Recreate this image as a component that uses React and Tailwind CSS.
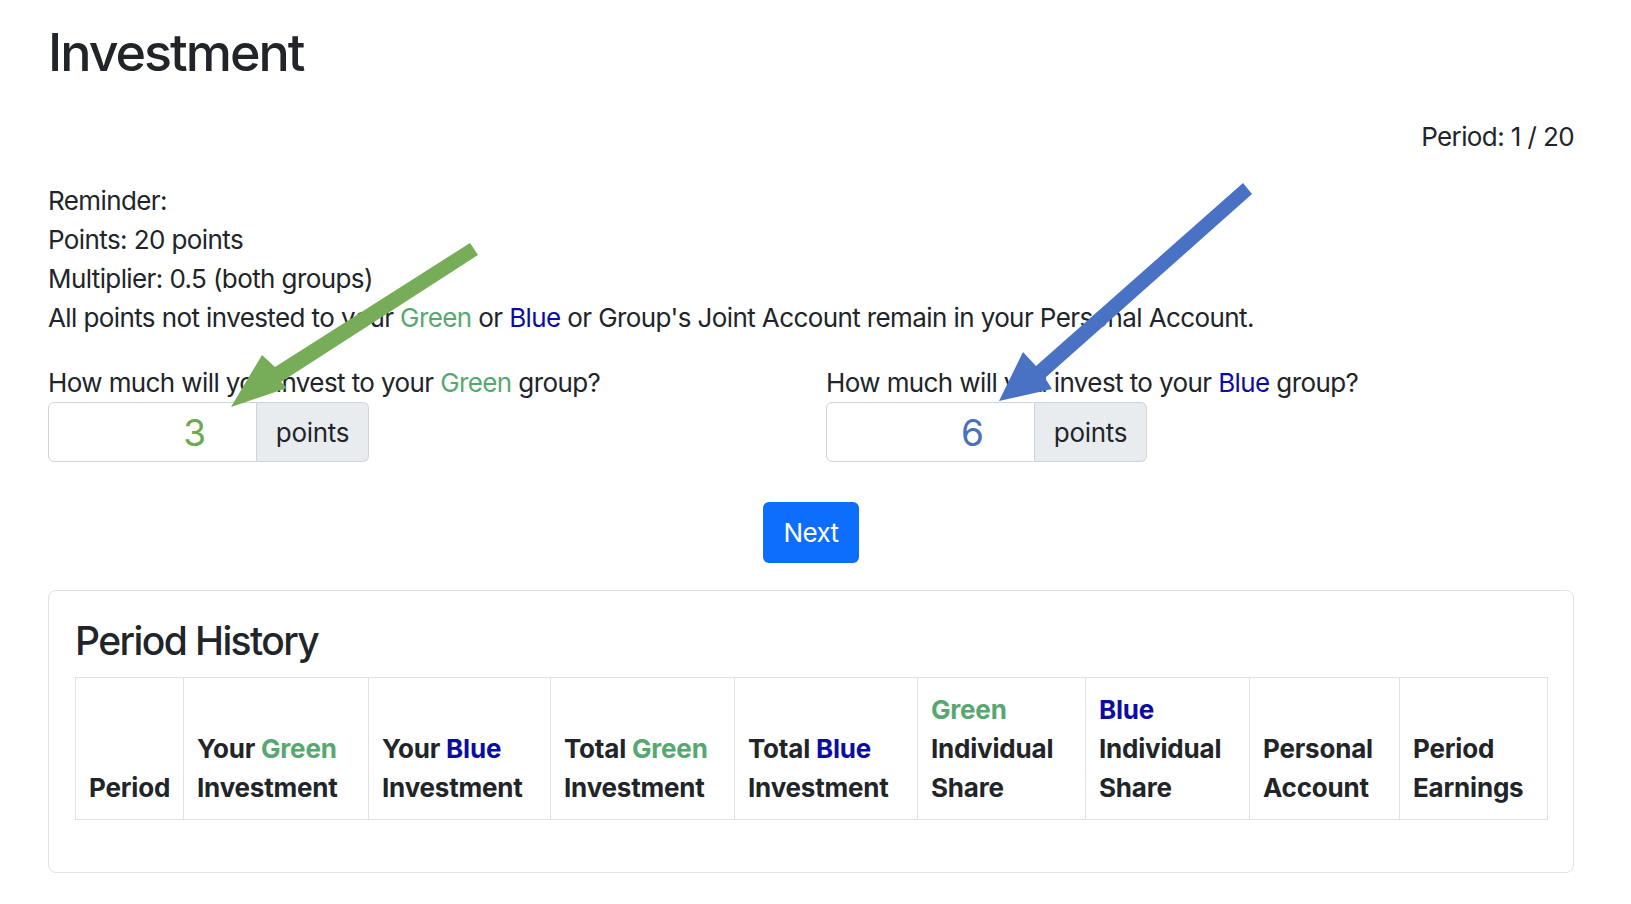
import React from 'react'

const G = ({ children }) => <span className="text-[#57a870]">{children}</span>
const B = ({ children }) => <span className="text-[#0b0ba6]">{children}</span>

function InvestField({ label, value, valueClass }) {
  return (
    <div>
      <p className="mb-0">{label}</p>
      <div className="flex h-[60px] w-[321px]">
        <div className="flex w-[209px] items-center justify-end rounded-l-[6px] border border-[#ced4da] bg-white pr-[50px]">
          <span className={`text-[37px] leading-none tracking-normal ${valueClass}`}>{value}</span>
        </div>
        <div className="flex flex-1 items-center justify-center rounded-r-[6px] border border-l-0 border-[#ced4da] bg-[#e9ecef] tracking-[-0.3px]">
          points
        </div>
      </div>
    </div>
  )
}

export default function App() {
  const headers = [
    { w: 'w-[108px]', content: <>Period</> },
    { w: 'w-[185px]', content: <>Your <G>Green</G><br />Investment</> },
    { w: 'w-[182px]', content: <>Your <B>Blue</B><br />Investment</> },
    { w: 'w-[184px]', content: <>Total <G>Green</G><br />Investment</> },
    { w: 'w-[183px]', content: <>Total <B>Blue</B><br />Investment</> },
    { w: 'w-[168px]', content: <><G>Green</G><br />Individual<br />Share</> },
    { w: 'w-[164px]', content: <><B>Blue</B><br />Individual<br />Share</> },
    { w: 'w-[150px]', content: <>Personal<br />Account</> },
    { w: 'w-[148px]', content: <>Period<br />Earnings</> },
  ]

  return (
    <main className="relative min-h-screen bg-white font-['Inter','Liberation_Sans',sans-serif] text-[26px] leading-[39px] tracking-[-0.6px] text-[#212529]">
      <div className="px-[48px] pt-[22px] pb-10 w-[1622px]">
        <h2 className="text-[52px] leading-[62px] font-medium tracking-[-2px]">Investment</h2>

        <div className="mt-[33px] text-right">Period: 1 / 20</div>

        <div className="mt-[25px]">
          <p>Reminder:</p>
          <p>Points: 20 points</p>
          <p>Multiplier: 0.5 (both groups)</p>
          <p>
            All points not invested to your <G>Green</G> or <B>Blue</B> or Group's Joint Account remain in your Personal Account.
          </p>
        </div>

        <div className="mt-[26px] grid grid-cols-2 gap-[30px]">
          <InvestField label={<>How much will you invest to your <G>Green</G> group?</>} value="3" valueClass="text-[#6fa94f]" />
          <InvestField label={<>How much will you invest to your <B>Blue</B> group?</>} value="6" valueClass="text-[#4a6fbd]" />
        </div>

        <div className="mt-[40px] flex justify-center">
          <button className="h-[61px] rounded-[6px] bg-[#0d6efd] px-[21px] text-white">Next</button>
        </div>

        <div className="mt-[27px] rounded-[8px] border border-[#dee2e6] px-[26px] pt-[26px] pb-[52px]">
          <h4 className="text-[39px] leading-[47px] font-medium tracking-[-1.6px]">Period History</h4>
          <table className="mt-[13px] w-[1472px] table-fixed border-collapse tracking-[-0.2px]">
            <thead>
              <tr>
                {headers.map((h, i) => (
                  <th
                    key={i}
                    className={`${h.w} border border-[#dee2e6] px-[13px] py-[12px] text-left align-bottom font-bold whitespace-nowrap`}
                  >
                    {h.content}
                  </th>
                ))}
              </tr>
            </thead>
          </table>
        </div>
      </div>

      {/* annotation arrows drawn over the page */}
      <svg className="pointer-events-none absolute left-0 top-0" width="1631" height="904">
        <polygon
          fill="#77ad58"
          points="470,243 478,255 281,382 287,388 231,407 262,355 275,367"
        />
        <polygon
          fill="#4a72c4"
          points="1243,183 1252,194 1045,378 1052,389 999,401 1023,352 1036,366"
        />
      </svg>
    </main>
  )
}
